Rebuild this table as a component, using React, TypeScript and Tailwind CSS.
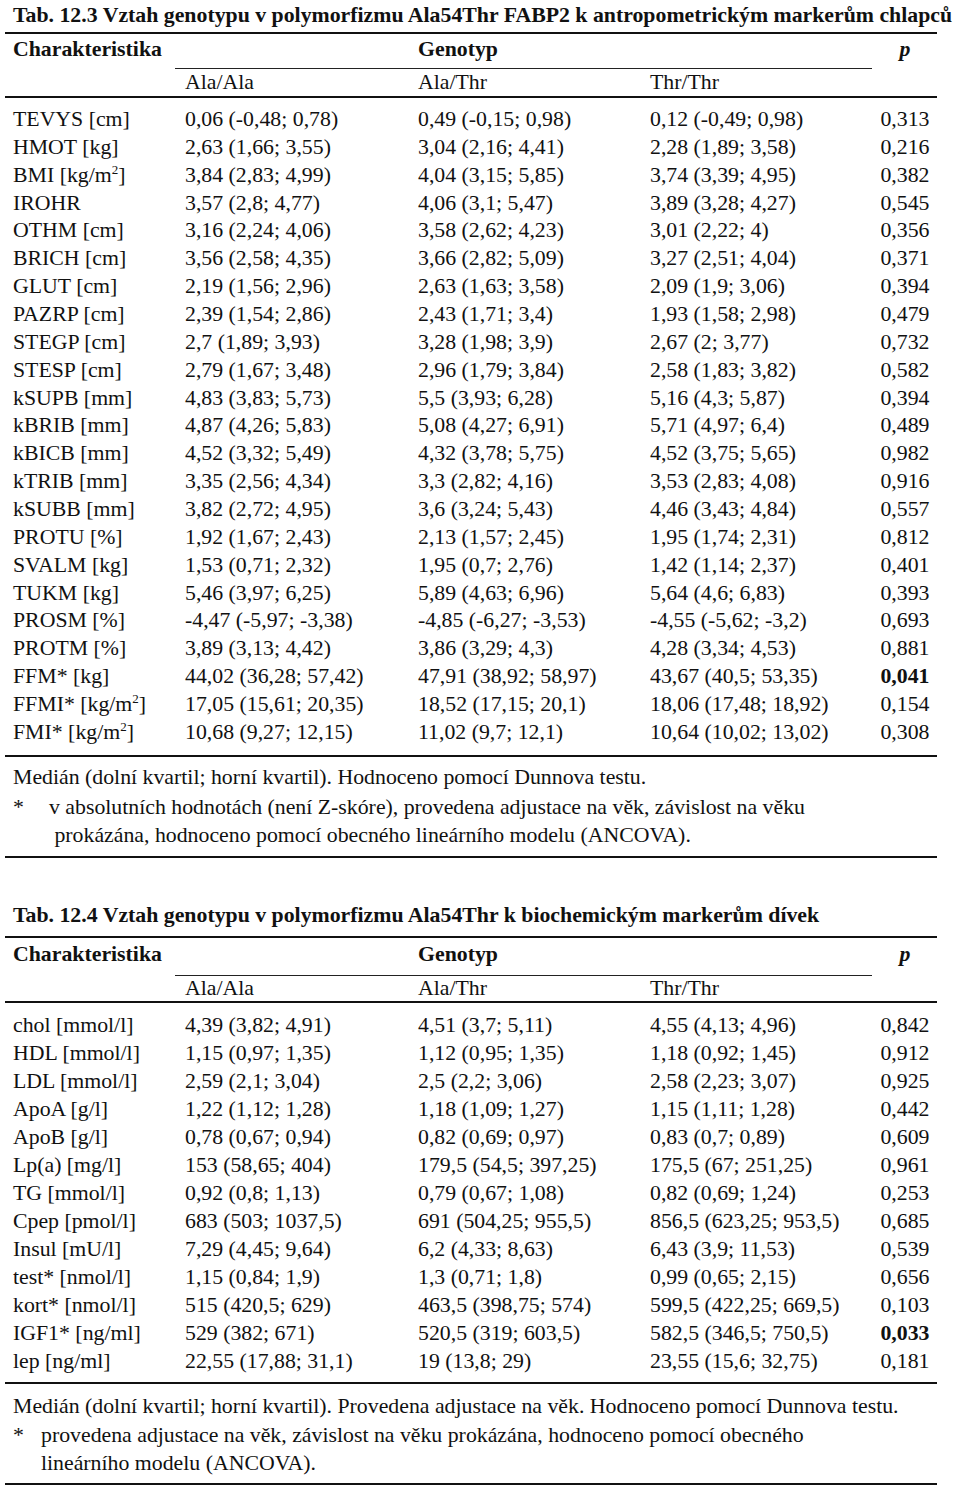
import type { ReactNode } from "react";

type Row = { label: ReactNode; a: string; b: string; c: string; p: string; bold?: boolean };

const m2 = (pre: string) => (
  <>
    {pre} [kg/m<sup className="text-[13px] -top-[8px]">2</sup>]
  </>
);

const boysRows: Row[] = [
  { label: "TEVYS [cm]", a: "0,06 (-0,48; 0,78)", b: "0,49 (-0,15; 0,98)", c: "0,12 (-0,49; 0,98)", p: "0,313" },
  { label: "HMOT [kg]", a: "2,63 (1,66; 3,55)", b: "3,04 (2,16; 4,41)", c: "2,28 (1,89; 3,58)", p: "0,216" },
  { label: m2("BMI"), a: "3,84 (2,83; 4,99)", b: "4,04 (3,15; 5,85)", c: "3,74 (3,39; 4,95)", p: "0,382" },
  { label: "IROHR", a: "3,57 (2,8; 4,77)", b: "4,06 (3,1; 5,47)", c: "3,89 (3,28; 4,27)", p: "0,545" },
  { label: "OTHM [cm]", a: "3,16 (2,24; 4,06)", b: "3,58 (2,62; 4,23)", c: "3,01 (2,22; 4)", p: "0,356" },
  { label: "BRICH [cm]", a: "3,56 (2,58; 4,35)", b: "3,66 (2,82; 5,09)", c: "3,27 (2,51; 4,04)", p: "0,371" },
  { label: "GLUT [cm]", a: "2,19 (1,56; 2,96)", b: "2,63 (1,63; 3,58)", c: "2,09 (1,9; 3,06)", p: "0,394" },
  { label: "PAZRP [cm]", a: "2,39 (1,54; 2,86)", b: "2,43 (1,71; 3,4)", c: "1,93 (1,58; 2,98)", p: "0,479" },
  { label: "STEGP [cm]", a: "2,7 (1,89; 3,93)", b: "3,28 (1,98; 3,9)", c: "2,67 (2; 3,77)", p: "0,732" },
  { label: "STESP [cm]", a: "2,79 (1,67; 3,48)", b: "2,96 (1,79; 3,84)", c: "2,58 (1,83; 3,82)", p: "0,582" },
  { label: "kSUPB [mm]", a: "4,83 (3,83; 5,73)", b: "5,5 (3,93; 6,28)", c: "5,16 (4,3; 5,87)", p: "0,394" },
  { label: "kBRIB [mm]", a: "4,87 (4,26; 5,83)", b: "5,08 (4,27; 6,91)", c: "5,71 (4,97; 6,4)", p: "0,489" },
  { label: "kBICB [mm]", a: "4,52 (3,32; 5,49)", b: "4,32 (3,78; 5,75)", c: "4,52 (3,75; 5,65)", p: "0,982" },
  { label: "kTRIB [mm]", a: "3,35 (2,56; 4,34)", b: "3,3 (2,82; 4,16)", c: "3,53 (2,83; 4,08)", p: "0,916" },
  { label: "kSUBB [mm]", a: "3,82 (2,72; 4,95)", b: "3,6 (3,24; 5,43)", c: "4,46 (3,43; 4,84)", p: "0,557" },
  { label: "PROTU [%]", a: "1,92 (1,67; 2,43)", b: "2,13 (1,57; 2,45)", c: "1,95 (1,74; 2,31)", p: "0,812" },
  { label: "SVALM [kg]", a: "1,53 (0,71; 2,32)", b: "1,95 (0,7; 2,76)", c: "1,42 (1,14; 2,37)", p: "0,401" },
  { label: "TUKM [kg]", a: "5,46 (3,97; 6,25)", b: "5,89 (4,63; 6,96)", c: "5,64 (4,6; 6,83)", p: "0,393" },
  { label: "PROSM [%]", a: "-4,47 (-5,97; -3,38)", b: "-4,85 (-6,27; -3,53)", c: "-4,55 (-5,62; -3,2)", p: "0,693" },
  { label: "PROTM [%]", a: "3,89 (3,13; 4,42)", b: "3,86 (3,29; 4,3)", c: "4,28 (3,34; 4,53)", p: "0,881" },
  { label: "FFM* [kg]", a: "44,02 (36,28; 57,42)", b: "47,91 (38,92; 58,97)", c: "43,67 (40,5; 53,35)", p: "0,041", bold: true },
  { label: m2("FFMI*"), a: "17,05 (15,61; 20,35)", b: "18,52 (17,15; 20,1)", c: "18,06 (17,48; 18,92)", p: "0,154" },
  { label: m2("FMI*"), a: "10,68 (9,27; 12,15)", b: "11,02 (9,7; 12,1)", c: "10,64 (10,02; 13,02)", p: "0,308" },
];

const girlsRows: Row[] = [
  { label: "chol [mmol/l]", a: "4,39 (3,82; 4,91)", b: "4,51 (3,7; 5,11)", c: "4,55 (4,13; 4,96)", p: "0,842" },
  { label: "HDL [mmol/l]", a: "1,15 (0,97; 1,35)", b: "1,12 (0,95; 1,35)", c: "1,18 (0,92; 1,45)", p: "0,912" },
  { label: "LDL [mmol/l]", a: "2,59 (2,1; 3,04)", b: "2,5 (2,2; 3,06)", c: "2,58 (2,23; 3,07)", p: "0,925" },
  { label: "ApoA [g/l]", a: "1,22 (1,12; 1,28)", b: "1,18 (1,09; 1,27)", c: "1,15 (1,11; 1,28)", p: "0,442" },
  { label: "ApoB [g/l]", a: "0,78 (0,67; 0,94)", b: "0,82 (0,69; 0,97)", c: "0,83 (0,7; 0,89)", p: "0,609" },
  { label: "Lp(a) [mg/l]", a: "153 (58,65; 404)", b: "179,5 (54,5; 397,25)", c: "175,5 (67; 251,25)", p: "0,961" },
  { label: "TG [mmol/l]", a: "0,92 (0,8; 1,13)", b: "0,79 (0,67; 1,08)", c: "0,82 (0,69; 1,24)", p: "0,253" },
  { label: "Cpep [pmol/l]", a: "683 (503; 1037,5)", b: "691 (504,25; 955,5)", c: "856,5 (623,25; 953,5)", p: "0,685" },
  { label: "Insul [mU/l]", a: "7,29 (4,45; 9,64)", b: "6,2 (4,33; 8,63)", c: "6,43 (3,9; 11,53)", p: "0,539" },
  { label: "test* [nmol/l]", a: "1,15 (0,84; 1,9)", b: "1,3 (0,71; 1,8)", c: "0,99 (0,65; 2,15)", p: "0,656" },
  { label: "kort* [nmol/l]", a: "515 (420,5; 629)", b: "463,5 (398,75; 574)", c: "599,5 (422,25; 669,5)", p: "0,103" },
  { label: "IGF1* [ng/ml]", a: "529 (382; 671)", b: "520,5 (319; 603,5)", c: "582,5 (346,5; 750,5)", p: "0,033", bold: true },
  { label: "lep [ng/ml]", a: "22,55 (17,88; 31,1)", b: "19 (13,8; 29)", c: "23,55 (15,6; 32,75)", p: "0,181" },
];

const cols = "grid grid-cols-[180px_233px_232px_230px_57px]";

const Rule = ({ className = "" }: { className?: string }) => (
  <div className={`h-[2px] w-[932px] bg-[#111] ${className}`} />
);

const Header = ({ tall }: { tall?: boolean }) => (
  <div className={`${cols} ${tall ? "grid-rows-[37px_1px_25px]" : "grid-rows-[34px_1px_27px]"}`}>
    <div className={`pl-[8px] font-bold leading-[28px] ${tall ? "pt-[2px]" : "pt-[1px]"}`}>Charakteristika</div>
    <div />
    <div className={`font-bold leading-[28px] ${tall ? "pt-[2px]" : "pt-[1px]"}`}>Genotyp</div>
    <div />
    <div className={`pr-[7px] text-center font-bold italic leading-[28px] ${tall ? "pt-[2px]" : "pt-[1px]"}`}>p</div>
    <div />
    <div className="col-span-3 -ml-[10px] mr-[8px] bg-[#222]" />
    <div />
    <div />
    <div className={`${tall ? "leading-[25px]" : "leading-[27px]"}`}>Ala/Ala</div>
    <div className={`${tall ? "leading-[25px]" : "leading-[27px]"}`}>Ala/Thr</div>
    <div className={`${tall ? "leading-[25px]" : "leading-[27px]"}`}>Thr/Thr</div>
    <div />
  </div>
);

const Body = ({ rows, rowH }: { rows: Row[]; rowH: string }) => (
  <div>
    {rows.map((r, i) => (
      <div key={i} className={`${cols} ${rowH} whitespace-nowrap`}>
        <div className="pl-[8px]">{r.label}</div>
        <div>{r.a}</div>
        <div>{r.b}</div>
        <div>{r.c}</div>
        <div className={`pr-[7px] text-center ${r.bold ? "font-bold" : ""}`}>{r.p}</div>
      </div>
    ))}
  </div>
);

export default function App() {
  return (
    <div className="w-[960px] min-h-[1486px] bg-white text-[#111] text-[21.8px] font-['Liberation_Serif','Times_New_Roman',serif]">
      {/* Tab. 12.3 */}
      <div className="pl-[13px] pt-[1px] font-bold leading-[28px] whitespace-nowrap">
        Tab. 12.3 Vztah genotypu v polymorfizmu Ala54Thr FABP2 k antropometrickým markerům chlapců
      </div>
      <div className="ml-[5px] mt-[3px]">
        <Rule />
        <Header />
        <Rule />
        <div className="pt-[8px] pb-[8px]">
          <Body rows={boysRows} rowH="h-[27.86px] leading-[27.86px]" />
        </div>
        <Rule />
        <div className="pl-[8px] pt-[6px] pb-[7px] leading-[28px]">
          <div>Medián (dolní kvartil; horní kvartil). Hodnoceno pomocí Dunnova testu.</div>
          <div className="mt-[2px] flex">
            <span className="w-[36px] shrink-0">*</span>
            <span>
              v absolutních hodnotách (není Z-skóre), provedena adjustace na věk, závislost na věku
              <br />
              &nbsp;prokázána, hodnoceno pomocí obecného lineárního modelu (ANCOVA).
            </span>
          </div>
        </div>
        <Rule />
      </div>

      {/* Tab. 12.4 */}
      <div className="mt-[43px] pl-[13px] font-bold leading-[28px] whitespace-nowrap">
        Tab. 12.4 Vztah genotypu v polymorfizmu Ala54Thr k biochemickým markerům dívek
      </div>
      <div className="ml-[5px] mt-[7px]">
        <Rule />
        <Header tall />
        <Rule />
        <div className="pt-[8px] pb-[7px]">
          <Body rows={girlsRows} rowH="h-[28px] leading-[28px]" />
        </div>
        <Rule />
        <div className="pl-[8px] pt-[8px] pb-[6px] leading-[28px]">
          <div>Medián (dolní kvartil; horní kvartil). Provedena adjustace na věk. Hodnoceno pomocí Dunnova testu.</div>
          <div className="mt-[1px] flex">
            <span className="w-[28px] shrink-0">*</span>
            <span>
              provedena adjustace na věk, závislost na věku prokázána, hodnoceno pomocí obecného
              <br />
              lineárního modelu (ANCOVA).
            </span>
          </div>
        </div>
        <Rule />
      </div>
    </div>
  );
}
